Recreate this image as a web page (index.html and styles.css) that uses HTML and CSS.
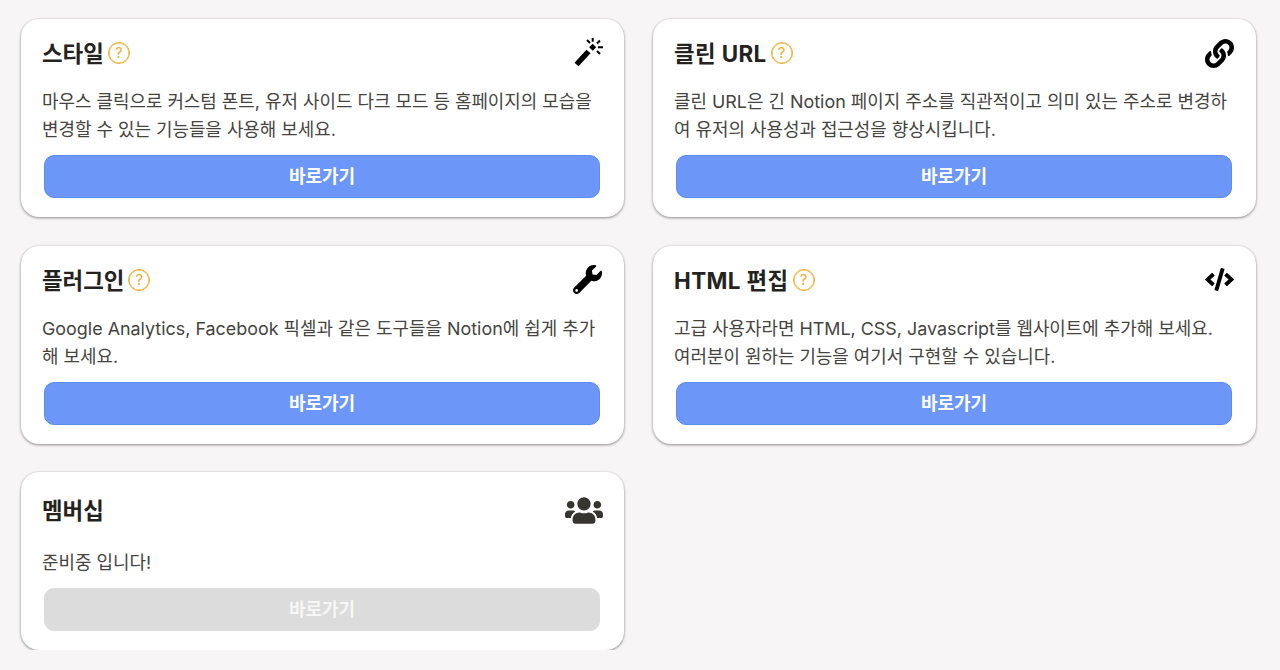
FILE: index.html
```html
<!DOCTYPE html>
<html lang="ko">
<head>
  <meta charset="UTF-8" />
  <meta name="viewport" content="width=device-width, initial-scale=1.0" />
  <title>설정</title>
  <link rel="stylesheet" href="styles.css">
</head>
<body>
  <main class="card-grid">

    <!-- 스타일 -->
    <section class="card">
      <div class="card-head">
        <h2>스타일</h2>
        <span class="help">?</span>
        <svg class="icon icon-wand" viewBox="0 0 30 30">
          <path class="wand" d="M3.5 26.500 15.500 13.500" />
          <path d="M19.700 5.800l3.500 3.500-3.500 3.500-3.500-3.500z" />
          <path class="rays" d="M19.700 0v3.700M30 9.300h-5M14 2l3 3M27 2.500 24 5.500M27 16 24 13" />
        </svg>
      </div>
      <p>마우스 클릭으로 커스텀 폰트, 유저 사이드 다크 모드 등 홈페이지의 모습을 변경할 수 있는 기능들을 사용해 보세요.</p>
      <a class="btn" href="#">바로가기</a>
    </section>

    <!-- 클린 URL -->
    <section class="card">
      <div class="card-head">
        <h2 class="title-wide">클린 URL</h2>
        <span class="help">?</span>
        <svg class="icon icon-link" viewBox="0 0 512 512">
          <path d="M326.612 185.391c59.747 59.809 58.927 155.698.36 214.59-.11.12-.24.25-.36.37l-67.2 67.2c-59.27 59.27-155.699 59.262-214.96 0-59.27-59.26-59.27-155.7 0-214.96l37.106-37.106c9.84-9.84 26.786-3.3 27.294 10.606.648 17.722 3.826 35.527 9.69 52.721 1.986 5.822.567 12.262-3.783 16.612l-13.087 13.087c-28.026 28.026-28.905 73.66-1.155 101.96 28.024 28.579 74.086 28.749 102.325.51l67.2-67.19c28.191-28.191 28.073-73.757 0-101.83-3.701-3.694-7.429-6.564-10.341-8.569a16.037 16.037 0 0 1-6.947-12.606c-.396-10.567 3.348-21.456 11.698-29.806l21.054-21.055c5.521-5.521 14.182-6.199 20.584-1.731a152.482 152.482 0 0 1 20.522 17.197zM467.547 44.449c-59.261-59.262-155.69-59.27-214.96 0l-67.2 67.2c-.12.12-.25.25-.36.37-58.566 58.892-59.387 154.781.36 214.59a152.454 152.454 0 0 0 20.521 17.196c6.402 4.468 15.064 3.789 20.584-1.731l21.054-21.055c8.35-8.35 12.094-19.239 11.698-29.806a16.037 16.037 0 0 0-6.947-12.606c-2.912-2.005-6.64-4.875-10.341-8.569-28.073-28.073-28.191-73.639 0-101.83l67.2-67.19c28.239-28.239 74.3-28.069 102.325.51 27.75 28.3 26.872 73.934-1.155 101.96l-13.087 13.087c-4.35 4.35-5.769 10.79-3.783 16.612 5.864 17.194 9.042 34.999 9.69 52.721.509 13.906 17.454 20.446 27.294 10.606l37.106-37.106c59.271-59.259 59.271-155.699.001-214.959z" />
        </svg>
      </div>
      <p>클린 URL은 긴 Notion 페이지 주소를 직관적이고 의미 있는 주소로 변경하여 유저의 사용성과 접근성을 향상시킵니다.</p>
      <a class="btn" href="#">바로가기</a>
    </section>

    <!-- 플러그인 -->
    <section class="card">
      <div class="card-head">
        <h2>플러그인</h2>
        <span class="help">?</span>
        <svg class="icon icon-link" viewBox="0 0 512 512">
          <path d="M507.73 109.1c-2.24-9.03-13.54-12.09-20.12-5.51l-74.36 74.36-67.88-11.31-11.31-67.88 74.36-74.36c6.62-6.62 3.43-17.9-5.66-20.16-47.38-11.74-99.55.91-136.58 37.93-39.64 39.64-50.55 97.1-34.05 147.2L18.74 402.76c-24.99 24.99-24.99 65.51 0 90.5 24.99 24.99 65.51 24.99 90.5 0l213.21-213.21c50.12 16.71 107.47 5.68 147.37-34.22 37.07-37.07 49.7-89.32 37.91-136.73zM64 472c-13.25 0-24-10.75-24-24 0-13.26 10.75-24 24-24s24 10.74 24 24c0 13.25-10.75 24-24 24z" />
        </svg>
      </div>
      <p>Google Analytics, Facebook 픽셀과 같은 도구들을 Notion에 쉽게 추가해 보세요.</p>
      <a class="btn" href="#">바로가기</a>
    </section>

    <!-- HTML 편집 -->
    <section class="card">
      <div class="card-head">
        <h2 class="title-wide">HTML 편집</h2>
        <span class="help">?</span>
        <svg class="icon icon-code" viewBox="0 0 640 512">
          <path d="M278.9 511.5l-61-17.7c-6.4-1.8-10-8.5-8.2-14.9L346.2 8.7c1.8-6.4 8.5-10 14.9-8.2l61 17.7c6.4 1.8 10 8.5 8.2 14.9L293.8 503.3c-1.9 6.4-8.5 10.1-14.9 8.2zm-114-112.2l43.5-46.4c4.6-4.9 4.3-12.7-.8-17.2L117 256l90.6-79.7c5.1-4.5 5.5-12.3.8-17.2l-43.5-46.4c-4.5-4.8-12.1-5.1-17-.5L3.8 247.2c-5.1 4.7-5.1 12.8 0 17.5l144.1 135.1c4.9 4.6 12.5 4.4 17-.5zm327.2.6l144.1-135.1c5.1-4.7 5.1-12.8 0-17.5L492.1 112.1c-4.8-4.5-12.4-4.3-17 .5L431.6 159c-4.6 4.9-4.3 12.7.8 17.2L523 256l-90.6 79.7c-5.1 4.5-5.5 12.3-.8 17.2l43.5 46.4c4.5 4.9 12.1 5.1 17 .6z" />
        </svg>
      </div>
      <p>고급 사용자라면 HTML, CSS, Javascript를 웹사이트에 추가해 보세요.<br>여러분이 원하는 기능을 여기서 구현할 수 있습니다.</p>
      <a class="btn" href="#">바로가기</a>
    </section>

    <!-- 멤버십 -->
    <section class="card card-soon">
      <div class="card-head">
        <h2>멤버십</h2>
        <svg class="icon icon-users" viewBox="0 0 640 512">
          <path d="M96 224c35.3 0 64-28.7 64-64s-28.7-64-64-64-64 28.7-64 64 28.7 64 64 64zm448 0c35.3 0 64-28.7 64-64s-28.7-64-64-64-64 28.7-64 64 28.7 64 64 64zm32 32h-64c-17.6 0-33.5 7.1-45.1 18.6 40.3 22.1 68.9 62 75.1 109.4h66c17.7 0 32-14.3 32-32v-32c0-35.3-28.7-64-64-64zm-256 0c61.9 0 112-50.1 112-112S381.9 32 320 32 208 82.1 208 144s50.1 112 112 112zm76.8 32h-8.3c-20.8 10-43.9 16-68.5 16s-47.6-6-68.5-16h-8.3C179.6 288 128 339.6 128 403.2V432c0 26.5 21.5 48 48 48h288c26.5 0 48-21.500 48-48v-28.8c0-63.6-51.6-115.2-115.2-115.2zm-223.7-13.4C161.5 263.1 145.600 256 128 256H64c-35.3 0-64 28.7-64 64v32c0 17.7 14.3 32 32 32h65.900c6.300-47.400 34.900-87.300 75.200-109.400z" />
        </svg>
      </div>
      <p>준비중 입니다!</p>
      <a class="btn btn-disabled" href="#">바로가기</a>
    </section>

  </main>
</body>
</html>
```

FILE: styles.css
```css
body {
  font-family: Inter, "Noto Sans CJK KR", sans-serif;
  margin: 0;
  padding: 19px 0 0 21px;
  background: #f7f5f6;
  color: #37352f;
}
.card-grid {
  display: grid;
  grid-template-columns: 603px 603px;
  gap: 28.5px 29px;
}
/* Cards */
.card {
  background: #fff;
  border-radius: 18px;
  padding: 14px 24px 19px 21px;
  box-shadow: 0 1px 3px rgba(0, 0, 0, 0.42), 0 0 2px rgba(0, 0, 0, 0.08);
}
.card-head {
  display: flex;
  align-items: center;
  height: 40px;
}
.card-head h2 {
  margin: 0 0 2px;
  font-size: 22.4px;
  font-weight: 700;
  color: #24231f;
}
.card-head .title-wide {
  letter-spacing: 0.4px;
}
.help {
  width: 20px;
  height: 20px;
  margin: 0 0 0 4px;
  border: 1px solid #ecad30;
  border-radius: 50%;
  box-shadow: inset 0 0 0 0.6px #ecad30;
  color: #ecad30;
  font-size: 15px;
  line-height: 20px;
  text-align: center;
}
.card p {
  margin: 15px 0 11px;
  font-size: 17.92px;
  line-height: 28px;
  height: 56px;
  color: #45443f;
}
/* Icons */
.icon {
  margin: 0 -2px 0 auto;
  fill: #000;
}
.icon-wand { width: 30px; height: 30px; margin-right: -3px; }
.icon-link { width: 29px; height: 29px; }
.icon-code { width: 29px; height: 23px; }
.icon-users { width: 38px; height: 31px; margin-right: -3px; fill: #37352f; }
.wand { fill: none; stroke: #000; stroke-width: 5.5; }
.rays { fill: none; stroke: #000; stroke-width: 2; }
/* Buttons */
.btn {
  display: block;
  height: 41px;
  margin-left: 2px;
  border: 1px solid #5f8bec;
  border-radius: 10px;
  background: #6c97f8;
  color: #fff;
  font-size: 18px;
  font-weight: 700;
  line-height: 41px;
  text-align: center;
  text-decoration: none;
}
.btn-disabled {
  border-color: #dcdcdc;
  background: #dcdcdc;
  color: #f6f6f6;
}
/* Membership card is laid out a little looser and has one line */
.card-soon .card-head {
  height: 48px;
}
.card-soon p {
  height: 28px;
}
```
